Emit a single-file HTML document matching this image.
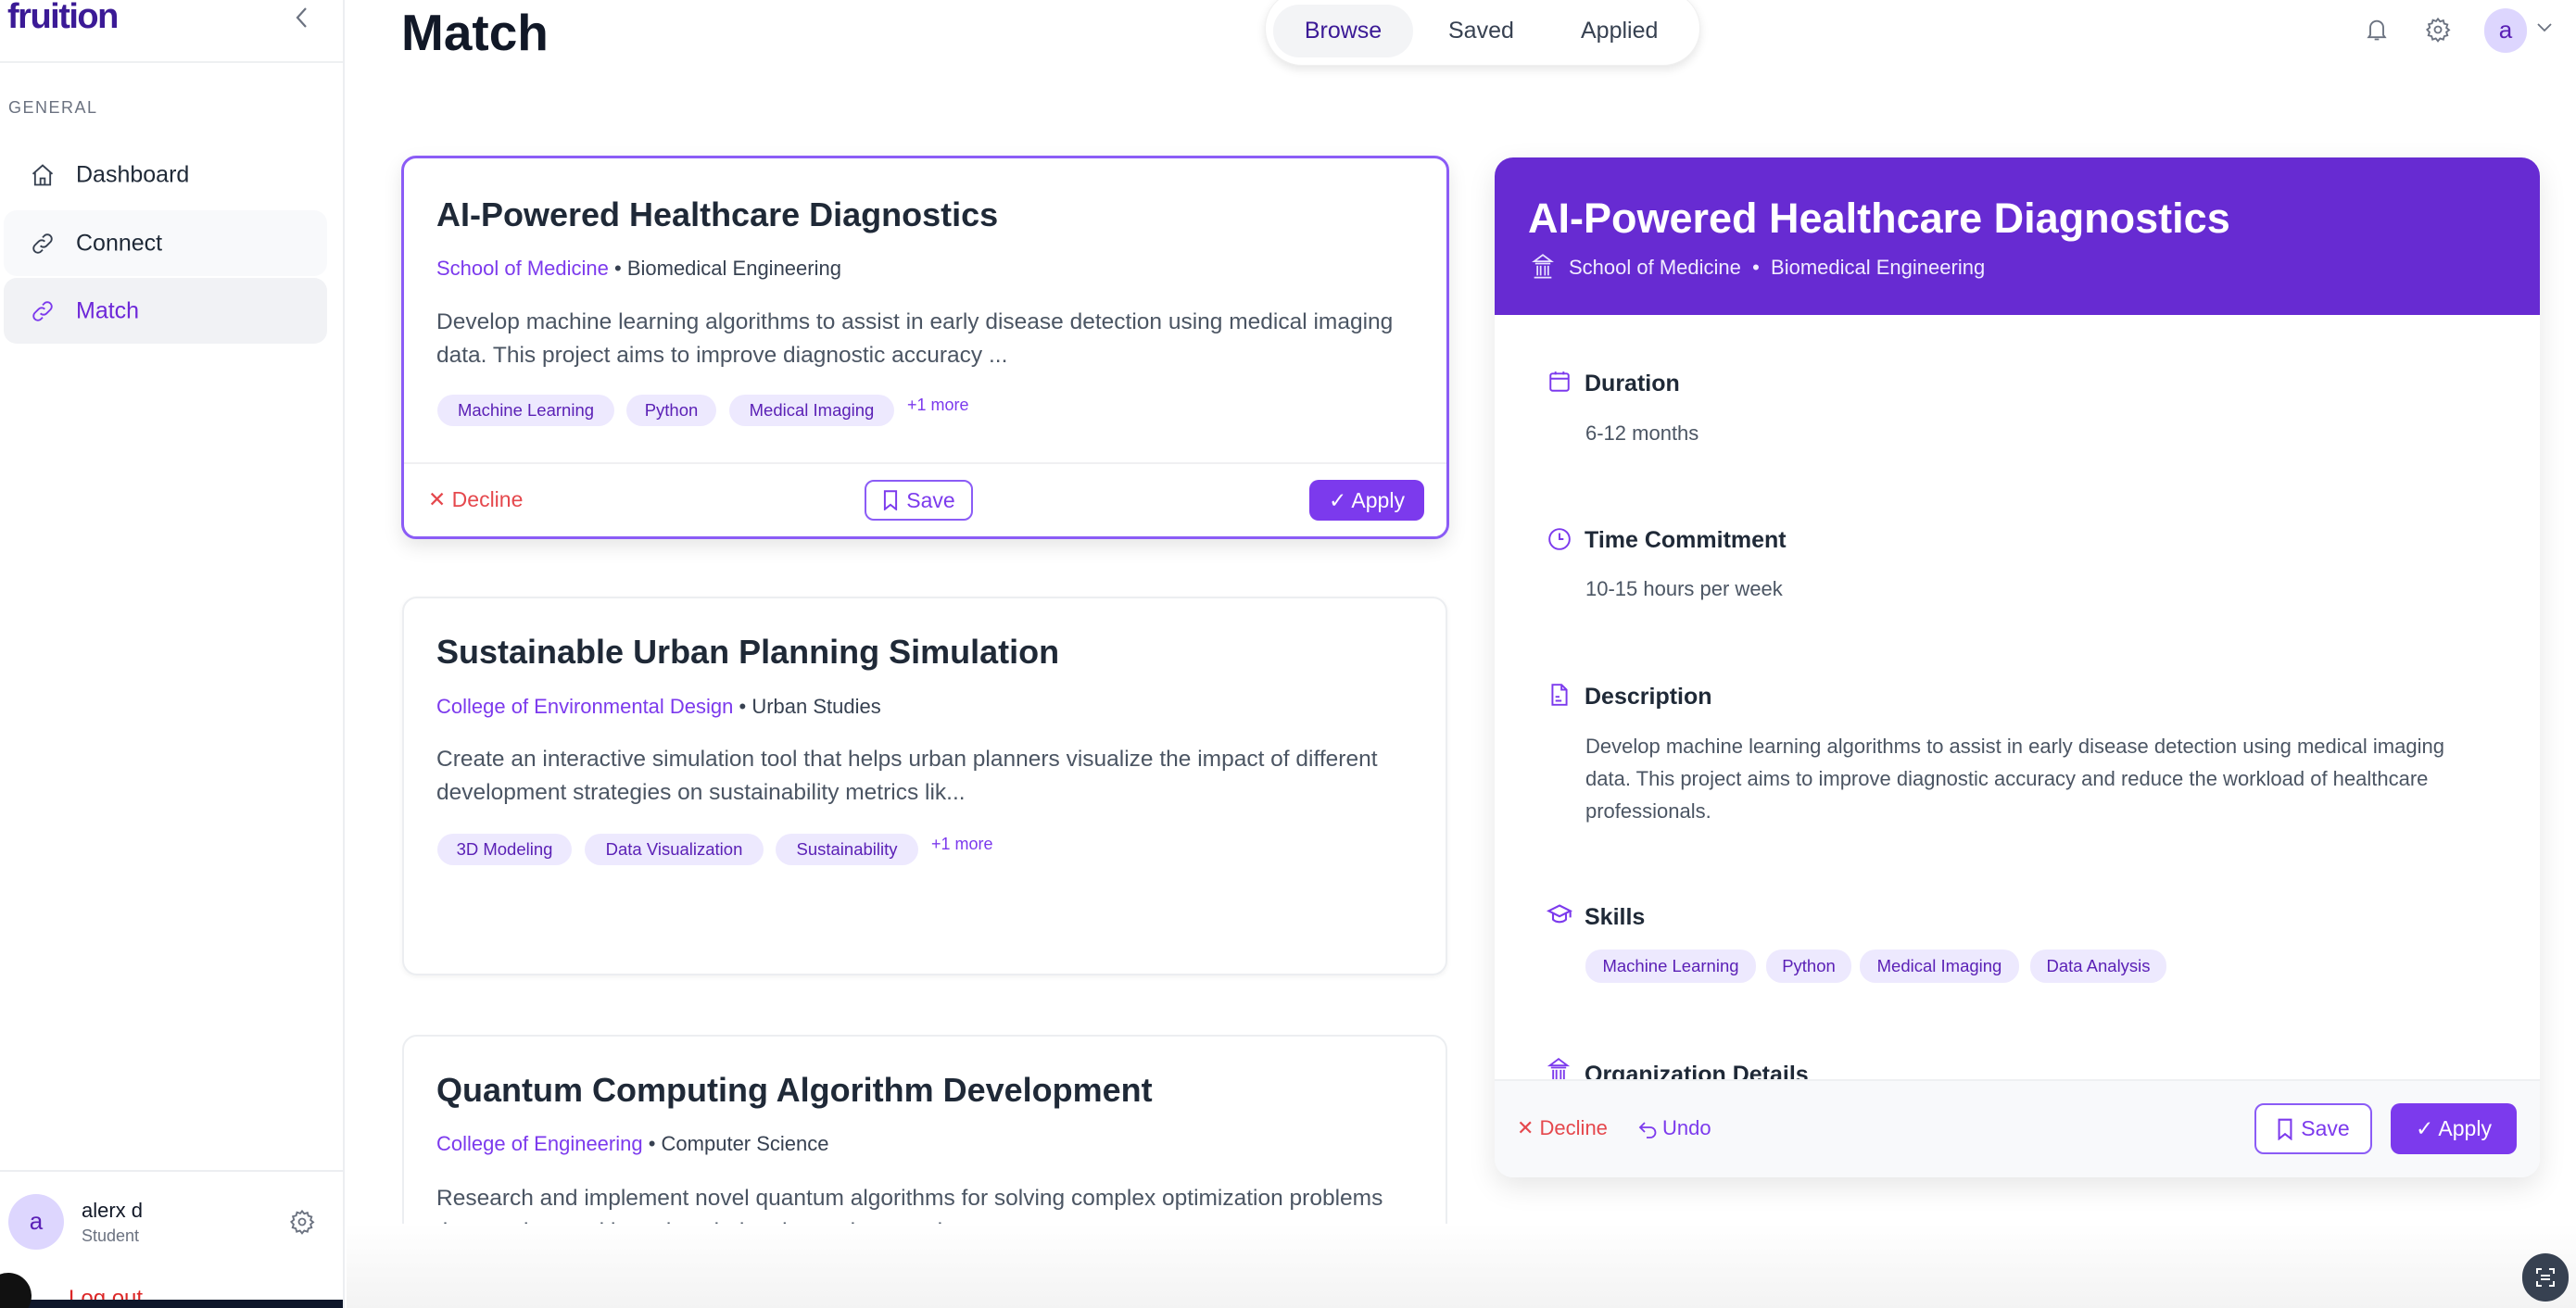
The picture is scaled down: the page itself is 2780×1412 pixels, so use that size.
<!DOCTYPE html>
<html><head><meta charset="utf-8"><style>
*{box-sizing:border-box;margin:0;padding:0}
html,body{width:2780px;height:1412px;overflow:hidden}
body{background:#fff;font-family:"Liberation Sans",sans-serif;position:relative;color:#1f2937}
.a{position:absolute;white-space:nowrap}
.sb{position:absolute;left:0;top:0;width:372px;height:1412px;border-right:2px solid #eceef1;background:#fff;overflow:hidden}
.nav{position:absolute;left:4px;width:349px;height:71px;border-radius:14px}
.nav span{position:absolute;left:78px;top:50%;transform:translateY(-50%);font-size:25px;color:#1f2937}
.nav svg{position:absolute;left:28px;top:50%;transform:translateY(-50%)}
.card{position:absolute;background:#fff;border-radius:16px}
.title{font-size:36px;font-weight:bold;color:#1f2937}
.sub{font-size:22px;color:#374151}
.sub b{font-weight:normal;color:#7c3aed}
.desc{font-size:24.5px;color:#4b5563;line-height:36px;white-space:normal}
.tag{position:absolute;height:34px;border-radius:17px;background:#ede9fe;color:#5b21b6;font-size:18.5px;line-height:34px;text-align:center}
.more{font-size:18px;color:#7c3aed}
.btnO{position:absolute;border:2px solid #8b5cf6;border-radius:10px;color:#7c3aed;font-size:23px;display:flex;align-items:center;justify-content:center;gap:8px;background:#fff}
.btnP{position:absolute;border-radius:10px;background:#7c3aed;color:#fff;font-size:23px;display:flex;align-items:center;justify-content:center;gap:8px}
.h{font-size:25px;font-weight:bold;color:#1f2937}
.v{font-size:22px;color:#4b5563}
</style></head><body>

<div class="sb">
  <div class="a" style="left:8px;top:-3px;font-size:38px;font-weight:bold;color:#3b1a96;letter-spacing:-1.5px">fruition</div>
  <svg class="a" style="left:316px;top:6px" width="20" height="26" viewBox="0 0 20 26"><path d="M14 3 L5 13 L14 23" fill="none" stroke="#6b7280" stroke-width="2.2"/></svg>
  <div class="a" style="left:0;top:66px;width:370px;height:2px;background:#eef0f2"></div>
  <div class="a" style="left:9px;top:106px;font-size:18px;color:#6b7280;letter-spacing:1.5px">GENERAL</div>
  <div class="nav" style="top:153px"><svg width="28" height="28" viewBox="0 0 24 24" fill="none" stroke="#374151" stroke-width="1.6"><path d="M3 11 L12 3 L21 11 M5 9.5 V21 H19 V9.5 M10 21 V15 H14 V21"/></svg><span>Dashboard</span></div>
  <div class="nav" style="top:227px;background:#f8f9fb"><svg width="28" height="28" viewBox="0 0 24 24" fill="none" stroke="#374151" stroke-width="1.6"><path d="M10 14 a4 4 0 0 0 5.7 0 l3.5-3.5 a4 4 0 0 0-5.7-5.7 l-1.5 1.5 M14 10 a4 4 0 0 0-5.7 0 l-3.5 3.5 a4 4 0 0 0 5.7 5.7 l1.5-1.5"/></svg><span>Connect</span></div>
  <div class="nav" style="top:300px;background:#f1f2f5"><svg width="28" height="28" viewBox="0 0 24 24" fill="none" stroke="#7c3aed" stroke-width="1.6"><path d="M10 14 a4 4 0 0 0 5.7 0 l3.5-3.5 a4 4 0 0 0-5.7-5.7 l-1.5 1.5 M14 10 a4 4 0 0 0-5.7 0 l-3.5 3.5 a4 4 0 0 0 5.7 5.7 l1.5-1.5"/></svg><span style="color:#6d28d9">Match</span></div>
  <div class="a" style="left:0;top:1263px;width:370px;height:2px;background:#eceef1"></div>
  <div class="a" style="left:9px;top:1289px;width:60px;height:60px;border-radius:30px;background:#ddd6fe;color:#5b21b6;font-size:26px;text-align:center;line-height:58px">a</div>
  <div class="a" style="left:88px;top:1294px;font-size:22px;color:#111827">alerx d</div>
  <div class="a" style="left:88px;top:1324px;font-size:18px;color:#6b7280">Student</div>
  <svg class="a" style="left:312px;top:1305px" width="28" height="28" viewBox="0 0 24 24" fill="none" stroke="#6b7280" stroke-width="1.6"><circle cx="12" cy="12" r="3"/><path d="M12 2 l2 2.5 3-1 .8 3 3 .8-1 3 2.5 2-2.5 2 1 3-3 .8-.8 3-3-1-2 2.5-2-2.5-3 1-.8-3-3-.8 1-3L2 12l2.5-2-1-3 3-.8.8-3 3 1z"/></svg>
  <div class="a" style="left:74px;top:1388px;font-size:24px;color:#dc2626">Log out</div>
  <div class="a" style="left:0;top:1403px;width:390px;height:9px;background:#0f172a"></div>
  <div class="a" style="left:-16px;top:1374px;width:50px;height:50px;border-radius:25px;background:#111"></div>
</div>

<div class="a" style="left:374px;top:1321px;width:2406px;height:91px;background:linear-gradient(#fff,#f3f3f3)"></div>

<div class="a" style="left:433px;top:3px;font-size:55px;font-weight:bold;color:#111827">Match</div>

<div class="a" style="left:1365px;top:-10px;width:470px;height:81px;border-radius:40px;background:#fff;box-shadow:0 4px 10px rgba(0,0,0,.1);border:1px solid #f0f0f0"></div>
<div class="a" style="left:1374px;top:5px;width:151px;height:57px;border-radius:28px;background:#f3f4f6"></div>
<div class="a" style="left:1374px;top:19px;width:151px;text-align:center;font-size:25px;color:#3b1a96">Browse</div>
<div class="a" style="left:1563px;top:19px;font-size:25px;color:#374151">Saved</div>
<div class="a" style="left:1706px;top:19px;font-size:25px;color:#374151">Applied</div>

<svg class="a" style="left:2551px;top:17px" width="28" height="30" viewBox="0 0 24 24" fill="none" stroke="#6b7280" stroke-width="1.6"><path d="M6 17 V10 a6 6 0 0 1 12 0 V17 L19.5 19 H4.5 Z M10 21 h4"/></svg>
<svg class="a" style="left:2617px;top:17px" width="28" height="30" viewBox="0 0 24 24" fill="none" stroke="#6b7280" stroke-width="1.6"><circle cx="12" cy="12" r="3"/><path d="M12 2 l2 2.5 3-1 .8 3 3 .8-1 3 2.5 2-2.5 2 1 3-3 .8-.8 3-3-1-2 2.5-2-2.5-3 1-.8-3-3-.8 1-3L2 12l2.5-2-1-3 3-.8.8-3 3 1z"/></svg>
<div class="a" style="left:2681px;top:9px;width:46px;height:48px;border-radius:24px;background:#ddd6fe;color:#5b21b6;font-size:26px;text-align:center;line-height:46px">a</div>
<svg class="a" style="left:2737px;top:24px" width="18" height="12" viewBox="0 0 18 12"><path d="M2 2 L9 9 L16 2" fill="none" stroke="#6b7280" stroke-width="1.8"/></svg>

<div class="card" style="left:433px;top:168px;width:1131px;height:414px;border:3px solid #8b5cf6;box-shadow:0 8px 20px rgba(0,0,0,.1)"></div>
<div class="a title" style="left:471px;top:211px">AI-Powered Healthcare Diagnostics</div>
<div class="a sub" style="left:471px;top:277px"><b>School of Medicine</b> • Biomedical Engineering</div>
<div class="a desc" style="left:471px;top:330px;width:1060px">Develop machine learning algorithms to assist in early disease detection using medical imaging data. This project aims to improve diagnostic accuracy ...</div>
<div class="tag" style="left:472px;top:426px;width:191px">Machine Learning</div>
<div class="tag" style="left:676px;top:426px;width:97px">Python</div>
<div class="tag" style="left:787px;top:426px;width:178px">Medical Imaging</div>
<div class="a more" style="left:979px;top:427px">+1 more</div>
<div class="a" style="left:436px;top:499px;width:1125px;height:2px;background:#f0f0f2"></div>
<div class="a" style="left:462px;top:526px;font-size:23px;color:#e5484d">✕ Decline</div>
<div class="btnO" style="left:933px;top:518px;width:117px;height:44px"><svg width="18" height="22" viewBox="0 0 14 18" fill="none" stroke="#7c3aed" stroke-width="1.6"><path d="M2 1 H12 V17 L7 13 L2 17 Z"/></svg>Save</div>
<div class="btnP" style="left:1413px;top:518px;width:124px;height:44px">✓ Apply</div>

<div class="card" style="left:434px;top:644px;width:1128px;height:409px;border:2px solid #eceef1;box-shadow:0 2px 6px rgba(0,0,0,.05)"></div>
<div class="a title" style="left:471px;top:683px">Sustainable Urban Planning Simulation</div>
<div class="a sub" style="left:471px;top:750px"><b>College of Environmental Design</b> • Urban Studies</div>
<div class="a desc" style="left:471px;top:802px;width:1060px">Create an interactive simulation tool that helps urban planners visualize the impact of different development strategies on sustainability metrics lik...</div>
<div class="tag" style="left:472px;top:900px;width:145px">3D Modeling</div>
<div class="tag" style="left:631px;top:900px;width:193px">Data Visualization</div>
<div class="tag" style="left:837px;top:900px;width:154px">Sustainability</div>
<div class="a more" style="left:1005px;top:901px">+1 more</div>

<div class="a" style="left:434px;top:1117px;width:1128px;height:204px;overflow:hidden">
  <div class="card" style="left:0;top:0;width:1128px;height:400px;border:2px solid #eceef1"></div>
  <div class="a title" style="left:37px;top:39px">Quantum Computing Algorithm Development</div>
  <div class="a sub" style="left:37px;top:105px"><b>College of Engineering</b> • Computer Science</div>
  <div class="a desc" style="left:37px;top:159px;width:1060px">Research and implement novel quantum algorithms for solving complex optimization problems that can be used in various industries and research</div>
</div>

<div class="a" style="left:1613px;top:170px;width:1128px;height:1101px;border-radius:20px;background:#fff;box-shadow:0 10px 30px rgba(0,0,0,.1);overflow:hidden">
  <div class="a" style="left:0;top:0;width:1128px;height:170px;background:#672bd2"></div>
  <div class="a" style="left:36px;top:40px;font-size:45px;font-weight:bold;color:#fff">AI-Powered Healthcare Diagnostics</div>
  <svg class="a" style="left:40px;top:104px" width="24" height="28" viewBox="0 0 20 24" fill="none" stroke="#e9e3ff" stroke-width="1.5"><path d="M10 1 L18 7 H2 Z M3 9 H17 M5 11 V20 M8 11 V20 M12 11 V20 M15 11 V20 M2 22 H18"/></svg>
  <div class="a" style="left:80px;top:106px;font-size:22px;color:#f1ecff">School of Medicine &nbsp;•&nbsp; Biomedical Engineering</div>

  <svg class="a" style="left:57px;top:229px" width="26" height="26" viewBox="0 0 24 24" fill="none" stroke="#7c3aed" stroke-width="1.8"><rect x="3" y="4" width="18" height="17" rx="2"/><path d="M3 9 H21 M8 2 V5 M16 2 V5"/></svg>
  <div class="a h" style="left:97px;top:230px">Duration</div>
  <div class="a v" style="left:98px;top:285px">6-12 months</div>
  <svg class="a" style="left:57px;top:399px" width="26" height="26" viewBox="0 0 24 24" fill="none" stroke="#7c3aed" stroke-width="1.8"><circle cx="12" cy="12" r="10"/><path d="M12 6 V12 H16"/></svg>
  <div class="a h" style="left:97px;top:399px">Time Commitment</div>
  <div class="a v" style="left:98px;top:453px">10-15 hours per week</div>
  <svg class="a" style="left:57px;top:566px" width="26" height="28" viewBox="0 0 24 24" fill="none" stroke="#7c3aed" stroke-width="1.8"><path d="M5 2 H14 L19 7 V22 H5 Z M14 2 V7 H19 M8 14 H12 M8 18 H14"/></svg>
  <div class="a h" style="left:97px;top:568px">Description</div>
  <div class="a v" style="left:98px;top:618px;width:980px;white-space:normal;line-height:35px">Develop machine learning algorithms to assist in early disease detection using medical imaging data. This project aims to improve diagnostic accuracy and reduce the workload of healthcare professionals.</div>
  <svg class="a" style="left:56px;top:804px" width="28" height="28" viewBox="0 0 24 24" fill="none" stroke="#7c3aed" stroke-width="1.8"><path d="M12 3 L22 8 L12 13 L2 8 Z M6 10 V16 C9 19 15 19 18 16 V10 M22 8 V14"/></svg>
  <div class="a h" style="left:97px;top:806px">Skills</div>
  <div class="tag" style="left:98px;top:855px;width:184px;height:36px;line-height:36px">Machine Learning</div>
  <div class="tag" style="left:293px;top:855px;width:92px;height:36px;line-height:36px">Python</div>
  <div class="tag" style="left:394px;top:855px;width:172px;height:36px;line-height:36px">Medical Imaging</div>
  <div class="tag" style="left:578px;top:855px;width:147px;height:36px;line-height:36px">Data Analysis</div>
  <svg class="a" style="left:57px;top:972px" width="24" height="28" viewBox="0 0 20 24" fill="none" stroke="#7c3aed" stroke-width="1.6"><path d="M10 1 L18 7 H2 Z M3 9 H17 M5 11 V20 M8 11 V20 M12 11 V20 M15 11 V20 M2 22 H18"/></svg>
  <div class="a h" style="left:97px;top:976px">Organization Details</div>

  <div class="a" style="left:0;top:995px;width:1128px;height:106px;background:#f8f9fb;border-top:2px solid #eef0f2"></div>
  <div class="a" style="left:24px;top:1035px;font-size:22px;color:#e5484d">✕ Decline</div>
  <svg class="a" style="left:153px;top:1037px" width="24" height="26" viewBox="0 0 24 24" fill="none" stroke="#7c3aed" stroke-width="1.8"><path d="M9 14 L4 9 L9 4 M4 9 H15 a5 5 0 0 1 0 11 H11"/></svg>
  <div class="a" style="left:181px;top:1035px;font-size:22px;color:#7c3aed">Undo</div>
  <div class="btnO" style="left:820px;top:1021px;width:127px;height:55px"><svg width="18" height="24" viewBox="0 0 14 18" fill="none" stroke="#7c3aed" stroke-width="1.6"><path d="M2 1 H12 V17 L7 13 L2 17 Z"/></svg>Save</div>
  <div class="btnP" style="left:967px;top:1021px;width:136px;height:55px">✓ Apply</div>
</div>

<div class="a" style="left:2722px;top:1353px;width:50px;height:52px;border-radius:25px;background:#374151"></div>
<svg class="a" style="left:2735px;top:1367px" width="24" height="24" viewBox="0 0 24 24" fill="none" stroke="#fff" stroke-width="2"><path d="M3 8 V3 H8 M16 3 H21 V8 M21 16 V21 H16 M8 21 H3 V16 M7 10 H17 M7 14 H17"/></svg>
</body></html>
